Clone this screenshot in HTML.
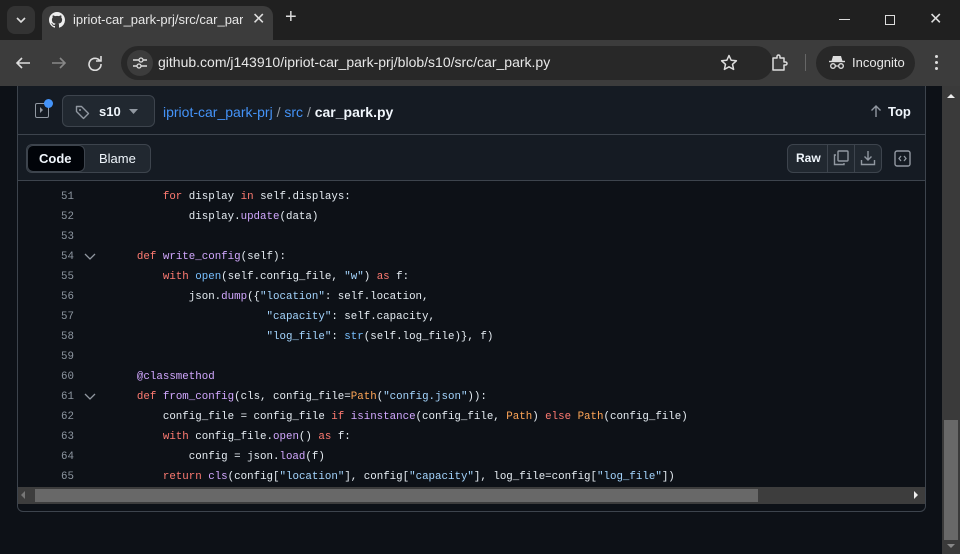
<!DOCTYPE html><html><head><style>
*{margin:0;padding:0;box-sizing:border-box}
body{width:960px;height:554px;overflow:hidden;background:#0d1117;font-family:"Liberation Sans",sans-serif;position:relative}
.abs{position:absolute}
.code{font-family:"Liberation Mono",monospace;font-size:10.8px;color:#e6edf3;white-space:pre}
.ln{position:absolute;left:20px;width:54px;text-align:right;color:#8d96a0;font-family:"Liberation Mono",monospace;font-size:10.8px;line-height:20px}
.k{color:#ff7b72}.f{color:#d2a8ff}.s{color:#a5d6ff}.c{color:#ffa657}.b{color:#79c0ff}
</style></head><body>
<!-- tab bar -->
<div class="abs" style="left:0;top:0;width:960px;height:40px;background:#202020"></div>
<div class="abs" style="left:7px;top:6px;width:28px;height:28px;border-radius:8px;background:#333"></div>
<svg class="abs" style="left:14px;top:14px" width="14" height="12"><path d="M3 4l4 4 4-4" stroke="#ddd" stroke-width="1.6" fill="none"/></svg>
<div class="abs" style="left:42px;top:6px;width:231px;height:34px;background:#3c3c3c;border-radius:10px 10px 0 0"></div>
<svg class="abs" style="left:49px;top:12px" width="16" height="16" viewBox="0 0 16 16"><path fill="#eee" d="M8 0C3.58 0 0 3.58 0 8c0 3.54 2.290 6.53 5.47 7.59.4.07.55-.17.55-.38v-1.33c-2.23.48-2.7-1.07-2.7-1.07-.36-.93-.89-1.170-.89-1.17-.73-.5.05-.49.05-.49.8.06 1.23.83 1.23.83.72 1.22 1.87.87 2.33.66.07-.52.28-.87.51-1.07-1.78-.2-3.65-.89-3.65-3.950 0-.87.31-1.59.82-2.15-.08-.2-.36-1.02.08-2.12 0 0 .67-.21 2.2.82a7.6 7.6 0 014 0c1.53-1.04 2.2-.82 2.2-.82.44 1.1.16 1.92.08 2.12.51.56.82 1.27.82 2.15 0 3.07-1.87 3.75-3.65 3.95.29.25.54.73.54 1.48v2.2c0 .21.15.46.55.38A8 8 0 0016 8c0-4.42-3.58-8-8-8z"/></svg>
<div class="abs" style="left:73px;top:12px;font-size:13px;color:#e8e8e8;width:170px;overflow:hidden;white-space:nowrap">ipriot-car_park-prj/src/car_park.py</div>
<div class="abs" style="left:252px;top:9px;font-size:16px;color:#ddd">✕</div>
<div class="abs" style="left:285px;top:6px;font-size:20px;color:#ddd">+</div>
<div class="abs" style="left:839px;top:19px;width:11px;height:1px;background:#ddd"></div>
<div class="abs" style="left:885px;top:15px;width:10px;height:10px;border:1px solid #ddd"></div>
<div class="abs" style="left:929px;top:9px;font-size:16px;color:#ddd">✕</div>
<!-- toolbar -->
<div class="abs" style="left:0;top:40px;width:960px;height:46px;background:#3c3c3c"></div>
<svg class="abs" style="left:15px;top:55px" width="16" height="16"><path d="M15 8H2M7 3 2 8l5 5" stroke="#ddd" stroke-width="1.6" fill="none"/></svg>
<svg class="abs" style="left:51px;top:55px" width="16" height="16"><path d="M1 8h13M9 3l5 5-5 5" stroke="#888" stroke-width="1.6" fill="none"/></svg>
<svg class="abs" style="left:87px;top:55px" width="16" height="16"><path d="M13 6A6 6 0 1 0 14 9" stroke="#ddd" stroke-width="1.6" fill="none"/><path d="M14 1v5H9" stroke="#ddd" stroke-width="1.6" fill="none"/></svg>
<div class="abs" style="left:121px;top:46px;width:652px;height:34px;background:#282828;border-radius:17px"></div>
<div class="abs" style="left:127px;top:50px;width:26px;height:26px;background:#3c3c3c;border-radius:13px"></div>
<svg class="abs" style="left:132px;top:56px" width="16" height="14"><path d="M1 4h6M11 4h4M1 10h4M9 10h6" stroke="#ddd" stroke-width="1.4"/><circle cx="9" cy="4" r="2" stroke="#ddd" fill="none" stroke-width="1.3"/><circle cx="7" cy="10" r="2" stroke="#ddd" fill="none" stroke-width="1.3"/></svg>
<div class="abs" style="left:158px;top:54px;font-size:14px;color:#e8e8e8">github.com/j143910/ipriot-car_park-prj/blob/s10/src/car_park.py</div>
<svg class="abs" style="left:720px;top:54px" width="18" height="18" viewBox="0 0 18 18"><path d="M9 1.5l2.2 4.8 5.2.5-3.9 3.5 1.1 5.1L9 12.8 4.4 15.4l1.1-5.1L1.6 6.8l5.2-.5z" stroke="#ddd" stroke-width="1.5" fill="none" stroke-linejoin="round"/></svg>
<svg class="abs" style="left:770px;top:53px" width="20" height="20" viewBox="0 0 20 20"><path d="M3 5h4V3.5a1.5 1.5 0 0 1 3 0V5h4v4h1.5a1.5 1.5 0 0 1 0 3H14v5H3z" stroke="#ddd" stroke-width="1.5" fill="none" stroke-linejoin="round"/></svg>
<div class="abs" style="left:805px;top:54px;width:1px;height:17px;background:#666"></div>
<div class="abs" style="left:816px;top:46px;width:99px;height:34px;background:#282828;border-radius:17px"></div>
<svg class="abs" style="left:828px;top:54px" width="18" height="16" viewBox="0 0 18 16"><path d="M5 2h8l1.5 5H3.5z" fill="#ddd"/><path d="M1 7.5h16" stroke="#ddd" stroke-width="1.4"/><circle cx="5" cy="12" r="2.3" stroke="#ddd" stroke-width="1.4" fill="none"/><circle cx="13" cy="12" r="2.3" stroke="#ddd" stroke-width="1.4" fill="none"/><path d="M7.3 12h3.4" stroke="#ddd" stroke-width="1.2"/></svg>
<div class="abs" style="left:852px;top:55px;font-size:13px;color:#e8e8e8">Incognito</div>
<div class="abs" style="left:935px;top:55px;width:3px;height:3px;border-radius:50%;background:#ddd;box-shadow:0 6px 0 #ddd,0 12px 0 #ddd"></div>
<!-- page -->
<div class="abs" style="left:0;top:86px;width:942px;height:468px;background:#0d1117"></div>
<div class="abs" style="left:17px;top:86px;width:909px;height:426px;border:1px solid #3d444d;border-top:none;border-radius:0 0 6px 6px;background:#0d1117"></div>
<div class="abs" style="left:18px;top:86px;width:907px;height:49px;background:#151b23;border-bottom:1px solid #3d444d"></div>
<div class="abs" style="left:18px;top:135px;width:907px;height:46px;background:#151b23;border-bottom:1px solid #3d444d"></div>
<div class="abs" style="left:35px;top:103px;width:14px;height:15px;border:1.5px solid #9198a1;border-radius:2px"></div>
<div class="abs" style="left:40px;top:107px;width:0;height:0;border:3px solid transparent;border-left-color:#9198a1;border-right:0"></div>
<div class="abs" style="left:44px;top:99px;width:9px;height:9px;border-radius:50%;background:#4493f8"></div>
<div class="abs" style="left:62px;top:95px;width:93px;height:32px;border:1px solid #3d444d;border-radius:6px;background:#212830"></div>
<svg class="abs" style="left:75px;top:104px" width="16" height="16" viewBox="0 0 16 16"><path d="M1.5 2.5v5l7 7 5-5-7-7z" stroke="#9198a1" stroke-width="1.4" fill="none" stroke-linejoin="round"/><circle cx="5" cy="6" r="1" fill="#9198a1"/></svg>
<div class="abs" style="left:99px;top:104px;font-size:13px;font-weight:bold;color:#f0f6fc">s10</div>
<svg class="abs" style="left:129px;top:109px" width="9" height="5"><path d="M0 0h9L4.5 5z" fill="#9198a1"/></svg>
<div class="abs" style="left:163px;top:104px;font-size:14px;color:#4493f8">ipriot-car_park-prj <span style="color:#9198a1">/</span> src <span style="color:#9198a1">/</span> <b style="color:#f0f6fc">car_park.py</b></div>
<svg class="abs" style="left:869px;top:104px" width="14" height="14"><path d="M7 13V2M2.5 6.5 7 2l4.5 4.5" stroke="#9198a1" stroke-width="1.4" fill="none"/></svg>
<div class="abs" style="left:888px;top:104px;font-size:13px;font-weight:bold;color:#f0f6fc">Top</div>
<div class="abs" style="left:26px;top:144px;width:125px;height:29px;border:1px solid #3d444d;border-radius:6px;background:#212830"></div>
<div class="abs" style="left:27px;top:145px;width:58px;height:27px;border:1px solid #3d444d;border-radius:6px;background:#010409"></div>
<div class="abs" style="left:39px;top:151px;font-size:13px;font-weight:bold;color:#f0f6fc">Code</div>
<div class="abs" style="left:99px;top:151px;font-size:13px;color:#f0f6fc">Blame</div>
<div class="abs" style="left:787px;top:144px;width:95px;height:29px;border:1px solid #3d444d;border-radius:6px;background:#212830"></div>
<div class="abs" style="left:827px;top:145px;width:1px;height:27px;background:#3d444d"></div>
<div class="abs" style="left:854px;top:145px;width:1px;height:27px;background:#3d444d"></div>
<div class="abs" style="left:796px;top:151px;font-size:12px;font-weight:bold;color:#f0f6fc">Raw</div>
<svg class="abs" style="left:833px;top:150px" width="16" height="16"><rect x="5" y="1" width="10" height="10" rx="1" stroke="#9198a1" stroke-width="1.4" fill="none"/><path d="M3 5H1.5v9.5H11V13" stroke="#9198a1" stroke-width="1.4" fill="none"/></svg>
<svg class="abs" style="left:860px;top:150px" width="16" height="16"><path d="M8 1v9M4.5 6.5 8 10l3.5-3.5M1.5 10v4.5h13V10" stroke="#9198a1" stroke-width="1.4" fill="none"/></svg>
<svg class="abs" style="left:894px;top:150px" width="17" height="17"><rect x="1" y="1" width="15" height="15" rx="2" stroke="#9198a1" stroke-width="1.4" fill="none"/><path d="M7 6 5 8.5 7 11M10 6l2 2.5-2 2.5" stroke="#9198a1" stroke-width="1.3" fill="none"/></svg>
<!-- code -->
<div class="abs" style="left:0;top:187px;width:926px">
<div class="ln" style="top:0">51</div><div class="ln" style="top:20px">52</div><div class="ln" style="top:40px">53</div><div class="ln" style="top:60px">54</div><div class="ln" style="top:80px">55</div><div class="ln" style="top:100px">56</div><div class="ln" style="top:120px">57</div><div class="ln" style="top:140px">58</div><div class="ln" style="top:160px">59</div><div class="ln" style="top:180px">60</div><div class="ln" style="top:200px">61</div><div class="ln" style="top:220px">62</div><div class="ln" style="top:240px">63</div><div class="ln" style="top:260px">64</div><div class="ln" style="top:280px">65</div>
<svg class="abs" style="left:84px;top:66px" width="12" height="8"><path d="M1 1l5 5 5-5" stroke="#9198a1" stroke-width="1.3" fill="none"/></svg>
<svg class="abs" style="left:84px;top:206px" width="12" height="8"><path d="M1 1l5 5 5-5" stroke="#9198a1" stroke-width="1.3" fill="none"/></svg>
<div class="code abs" style="left:111px;top:0;line-height:20px">        <span class="k">for</span> display <span class="k">in</span> self.displays:
            display.<span class="f">update</span>(data)

    <span class="k">def</span> <span class="f">write_config</span>(self):
        <span class="k">with</span> <span class="b">open</span>(self.config_file, <span class="s">"w"</span>) <span class="k">as</span> f:
            json.<span class="f">dump</span>({<span class="s">"location"</span>: self.location,
                        <span class="s">"capacity"</span>: self.capacity,
                        <span class="s">"log_file"</span>: <span class="b">str</span>(self.log_file)}, f)

    <span class="f">@classmethod</span>
    <span class="k">def</span> <span class="f">from_config</span>(cls, config_file=<span class="c">Path</span>(<span class="s">"config.json"</span>)):
        config_file = config_file <span class="k">if</span> <span class="f">isinstance</span>(config_file, <span class="c">Path</span>) <span class="k">else</span> <span class="c">Path</span>(config_file)
        <span class="k">with</span> config_file.<span class="f">open</span>() <span class="k">as</span> f:
            config = json.<span class="f">load</span>(f)
        <span class="k">return</span> <span class="f">cls</span>(config[<span class="s">"location"</span>], config[<span class="s">"capacity"</span>], log_file=config[<span class="s">"log_file"</span>])</div>
</div>
<!-- h scrollbar -->
<div class="abs" style="left:18px;top:487px;width:907px;height:17px;background:#3d3d3d"></div>
<div class="abs" style="left:35px;top:489px;width:723px;height:13px;background:#686868"></div>
<div class="abs" style="left:21px;top:491px;width:0;height:0;border:4px solid transparent;border-right-color:#777;border-left:0"></div>
<div class="abs" style="left:914px;top:491px;width:0;height:0;border:4px solid transparent;border-left-color:#eee;border-right:0"></div>
<!-- v scrollbar -->
<div class="abs" style="left:942px;top:86px;width:18px;height:468px;background:#3a3a3a"></div>
<div class="abs" style="left:944px;top:420px;width:14px;height:120px;background:#686868"></div>
<div class="abs" style="left:947px;top:94px;width:0;height:0;border:4px solid transparent;border-bottom-color:#eee;border-top:0"></div>
<div class="abs" style="left:947px;top:544px;width:0;height:0;border:4px solid transparent;border-top-color:#888;border-bottom:0"></div>
</body></html>
